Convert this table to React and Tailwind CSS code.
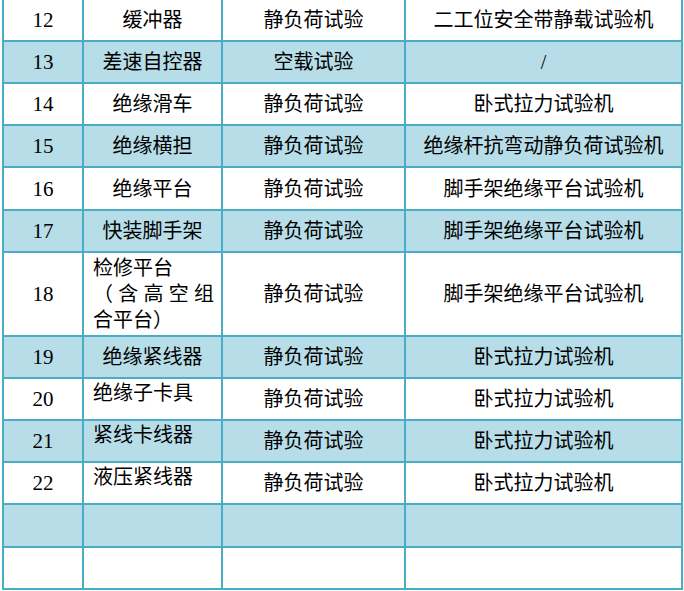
import React from 'react';

const rows = [
  { no: '12', name: '缓冲器', test: '静负荷试验', machine: '二工位安全带静载试验机' },
  { no: '13', name: '差速自控器', test: '空载试验', machine: '/', fill: true },
  { no: '14', name: '绝缘滑车', test: '静负荷试验', machine: '卧式拉力试验机' },
  { no: '15', name: '绝缘横担', test: '静负荷试验', machine: '绝缘杆抗弯动静负荷试验机', fill: true },
  { no: '16', name: '绝缘平台', test: '静负荷试验', machine: '脚手架绝缘平台试验机', h: 'h-[43px]' },
  { no: '17', name: '快装脚手架', test: '静负荷试验', machine: '脚手架绝缘平台试验机', fill: true },
  { no: '18', name: 'multi', test: '静负荷试验', machine: '脚手架绝缘平台试验机', h: 'h-[84px]' },
  { no: '19', name: '绝缘紧线器', test: '静负荷试验', machine: '卧式拉力试验机', fill: true },
  { no: '20', name: '绝缘子卡具', test: '静负荷试验', machine: '卧式拉力试验机', top: true },
  { no: '21', name: '紧线卡线器', test: '静负荷试验', machine: '卧式拉力试验机', fill: true, top: true },
  { no: '22', name: '液压紧线器', test: '静负荷试验', machine: '卧式拉力试验机', top: true },
  { no: '', name: '', test: '', machine: '', fill: true, h: 'h-[43px]' },
  { no: '', name: '', test: '', machine: '' },
];

const cell = 'border-2 border-[#4bacc6] p-0 text-center align-middle';

export default function App() {
  return (
    <div className="w-[684px] h-[591px] overflow-hidden bg-white">
      <table
        className="table-fixed border-collapse ml-[2px] -mt-[2px] text-[20px] leading-[26px] text-black"
        style={{ fontFamily: "'Liberation Serif', 'Noto Sans CJK SC', serif" }}
      >
        <colgroup>
          <col className="w-[80px]" />
          <col className="w-[139px]" />
          <col className="w-[183px]" />
          <col className="w-[277px]" />
        </colgroup>
        <tbody>
          {rows.map((r, i) => (
            <tr key={i} className={`${r.h || 'h-[42px]'} ${r.fill ? 'bg-[#b7dde8]' : 'bg-white'}`}>
              <td className={`${cell} text-[21px]`}>{r.no}</td>
              {r.name === 'multi' ? (
                <td className={`${cell} text-left pl-[9px]`}>
                  <div>检修平台</div>
                  <div className="flex justify-between w-[121px]">
                    <span>（</span><span>含</span><span>高</span><span>空</span><span>组</span>
                  </div>
                  <div>合平台）</div>
                </td>
              ) : r.top ? (
                <td className={`${cell} text-left align-top pl-[9px] pt-[1px]`}>{r.name}</td>
              ) : (
                <td className={cell}>{r.name}</td>
              )}
              <td className={cell}>{r.test}</td>
              <td className={cell}>{r.machine}</td>
            </tr>
          ))}
        </tbody>
      </table>
    </div>
  );
}
